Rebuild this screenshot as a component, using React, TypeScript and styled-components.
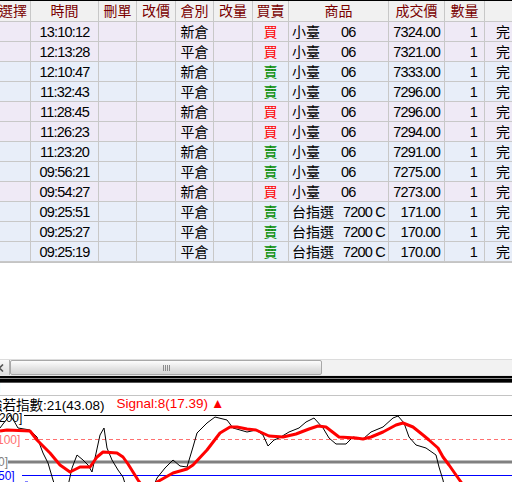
import React from 'react';
import styled, { createGlobalStyle } from 'styled-components';

const GlobalStyle = createGlobalStyle`
  html, body {
    margin: 0;
    padding: 0;
    background: #fff;
    overflow: hidden;
  }
  #root {
    width: 512px;
    height: 482px;
  }
`;

// widths of each column, border included (column lines at 30, 98, 136 ...)
const colWidths = [35, 68, 38, 39, 38, 39, 36, 100, 56, 40, 28];
const headers = ['選擇', '時間', '刪單', '改價', '倉別', '改量', '買賣', '商品', '成交價', '數量', ''];

type Side = 'buy' | 'sell';

interface Fill {
  time: string;
  kind: string;
  side: Side;
  product: string;
  code: string;
  price: string;
}

const fills: Fill[] = [
  { time: '13:10:12', kind: '新倉', side: 'buy', product: '小臺', code: '06', price: '7324.00' },
  { time: '12:13:28', kind: '平倉', side: 'buy', product: '小臺', code: '06', price: '7321.00' },
  { time: '12:10:47', kind: '新倉', side: 'sell', product: '小臺', code: '06', price: '7333.00' },
  { time: '11:32:43', kind: '平倉', side: 'sell', product: '小臺', code: '06', price: '7296.00' },
  { time: '11:28:45', kind: '新倉', side: 'buy', product: '小臺', code: '06', price: '7296.00' },
  { time: '11:26:23', kind: '平倉', side: 'buy', product: '小臺', code: '06', price: '7294.00' },
  { time: '11:23:20', kind: '新倉', side: 'sell', product: '小臺', code: '06', price: '7291.00' },
  { time: '09:56:21', kind: '平倉', side: 'sell', product: '小臺', code: '06', price: '7275.00' },
  { time: '09:54:27', kind: '新倉', side: 'buy', product: '小臺', code: '06', price: '7273.00' },
  { time: '09:25:51', kind: '平倉', side: 'sell', product: '台指選', code: '7200 C', price: '171.00' },
  { time: '09:25:27', kind: '平倉', side: 'sell', product: '台指選', code: '7200 C', price: '170.00' },
  { time: '09:25:19', kind: '平倉', side: 'sell', product: '台指選', code: '7200 C', price: '170.00' },
];

const Window = styled.div`
  width: 512px;
  height: 482px;
  overflow: hidden;
  display: flex;
  flex-direction: column;
  font-family: 'Liberation Sans', 'Noto Sans CJK TC', sans-serif;
  background: #fff;
`;

const GridPane = styled.div`
  height: 359px;
  flex: none;
  overflow: hidden;
`;

const Table = styled.div`
  margin-left: -4px;
  width: max-content;
  border-bottom: 1px solid #c4c4c4;
`;

const HeaderRow = styled.div`
  display: flex;
  height: 22px;
  box-sizing: border-box;
  border-top: 1px solid #000;
  border-bottom: 1px solid #c8c8c8;
  background: #f1f1f1;
  color: #7a0000;
  font-size: 14px;
`;

const Row = styled.div<{ $side: Side }>`
  display: flex;
  height: 20px;
  box-sizing: border-box;
  border-bottom: 1px solid #c8c8c8;
  background: ${({ $side }) => ($side === 'buy' ? '#efeaf6' : '#e8eef9')};
  color: #000;
  font-size: 14px;
`;

const Cell = styled.div<{ $w: number; $align?: 'left' | 'center' | 'right'; $pad?: number }>`
  width: ${({ $w }) => $w}px;
  flex: none;
  box-sizing: border-box;
  border-right: 1px solid #c8c8c8;
  display: flex;
  align-items: center;
  justify-content: ${({ $align }) =>
    $align === 'left' ? 'flex-start' : $align === 'right' ? 'flex-end' : 'center'};
  padding: 0 ${({ $pad }) => $pad ?? 0}px;
  white-space: nowrap;
  overflow: hidden;
  line-height: 18px;
`;

const Num = styled.span`
  font-size: 14.5px;
  letter-spacing: -0.8px;
`;

const SideMark = styled.span<{ $side: Side }>`
  color: ${({ $side }) => ($side === 'buy' ? '#ff0000' : '#008c00')};
`;

const ProductName = styled.span<{ $long: boolean }>`
  display: inline-block;
  width: ${({ $long }) => ($long ? 53 : 49)}px;
`;

const ScrollBar = styled.div`
  height: 17px;
  flex: none;
  display: flex;
  margin-left: -7px;
  box-sizing: border-box;
  border-top: 1px solid #dcdcdc;
  border-bottom: 1px solid #e6e6e6;
  background: #f2f2f2;
`;

const ArrowButton = styled.div`
  width: 17px;
  flex: none;
  display: flex;
  align-items: center;
  justify-content: center;
  box-sizing: border-box;
  border-right: 1px solid #b0b0b0;
  background: linear-gradient(#fafafa, #dcdcdc);
`;

const Thumb = styled.div`
  width: 312px;
  flex: none;
  box-sizing: border-box;
  border: 1px solid #a8a8a8;
  border-radius: 2px;
  background: linear-gradient(#fdfdfd, #e2e2e2 60%, #d4d4d4);
  display: flex;
  align-items: center;
  justify-content: center;
`;

const Grip = styled.div`
  width: 7px;
  height: 6px;
  background: repeating-linear-gradient(90deg, #8c8c8c 0 1px, transparent 1px 2px);
`;

const Splitter = styled.div`
  height: 7px;
  flex: none;
  background: linear-gradient(#000 0 2px, #8a8a8a 2px 3px, #000 3px 6px, #555 6px 7px);
`;

const ChartTop = styled.div`
  height: 13px;
  flex: none;
  box-sizing: border-box;
  border-bottom: 1px solid #c4c4c4;
  font-size: 12px;
  line-height: 6px;
  color: #000;
  margin-left: -3px;
`;

const Legend = styled.div`
  height: 15px;
  flex: none;
  display: flex;
  align-items: center;
  gap: 12px;
  margin-left: -11px;
  font-size: 13.5px;
  white-space: nowrap;
`;

const LegendItem = styled.span<{ $color: string }>`
  color: ${({ $color }) => $color};
  display: flex;
  align-items: center;
  gap: 3px;
`;

const ChartArea = styled.div`
  flex: 1;
  overflow: hidden;
`;

const redLine = [
  [0, 431], [7, 430], [30, 431], [37, 440], [50, 453], [60, 465], [70, 472], [80, 467],
  [90, 467], [97, 457], [103, 452], [117, 453], [123, 457], [128, 464], [133, 472],
  [138, 480], [145, 490], [150, 492], [157, 482], [173, 473], [187, 469], [193, 465],
  [207, 450], [220, 433], [230, 427], [237, 427], [247, 429], [256, 430], [269, 436],
  [283, 437], [296, 434], [309, 429], [318, 426], [326, 427], [339, 437], [356, 438],
  [363, 439], [371, 437], [383, 432], [396, 425], [403, 423], [413, 427], [423, 435],
  [429, 440], [438, 448], [443, 457], [449, 465], [456, 475], [461, 482], [466, 490],
];

const blackLine = [
  [0, 428], [3, 424], [10, 415], [14, 421], [18, 428], [30, 430], [37, 437], [43, 453],
  [48, 463], [53, 480], [58, 495], [66, 495], [72, 468], [77, 455], [83, 460], [88, 465],
  [92, 472], [95, 458], [100, 435], [104, 428], [107, 448], [112, 460], [118, 470],
  [123, 477], [127, 490], [150, 495], [157, 478], [165, 468], [173, 460], [180, 466],
  [187, 467], [193, 447], [197, 433], [207, 423], [215, 417], [227, 420], [233, 428],
  [247, 432], [256, 430], [263, 435], [268, 446], [274, 440], [279, 438], [289, 432],
  [299, 428], [306, 422], [314, 418], [323, 428], [329, 438], [336, 444], [346, 444],
  [353, 437], [363, 439], [371, 432], [383, 427], [393, 418], [398, 416], [404, 423],
  [409, 437], [416, 445], [426, 448], [436, 455], [439, 467], [443, 480], [445, 490],
];

const toPoints = (pts: number[][]) => pts.map(([x, y]) => `${x},${y}`).join(' ');

const OscillatorChart = () => (
  <svg width="512" height="80" viewBox="0 411 512 80" style={{ display: 'block' }}>
    <g fontFamily="'Liberation Sans', sans-serif" fontSize="12">
      <line x1="24" y1="415.5" x2="512" y2="415.5" stroke="#000" strokeWidth="1" />
      <text x="-1" y="422" fill="#000">200]</text>
      <line x1="25" y1="439.5" x2="512" y2="439.5" stroke="#ff7070" strokeWidth="1" strokeDasharray="4 3" />
      <text x="-3" y="444" fill="#ff7070">100]</text>
      <line x1="8" y1="462" x2="512" y2="462" stroke="#808080" strokeWidth="3" />
      <text x="-2" y="466" fill="#808080">0]</text>
      <line x1="22" y1="475.5" x2="512" y2="475.5" stroke="#0000ff" strokeWidth="1" />
      <text x="-6" y="480" fill="#0000ff">-50]</text>
      <rect x="25" y="481" width="3" height="1" fill="#8080ff" />
    </g>
    <polyline points={toPoints(blackLine)} fill="none" stroke="#000" strokeWidth="1" />
    <polyline points={toPoints(redLine)} fill="none" stroke="#ff0000" strokeWidth="3" strokeLinejoin="round" />
  </svg>
);

const App = () => (
  <>
    <GlobalStyle />
    <Window>
      <GridPane>
        <Table>
          <HeaderRow>
            {headers.map((h, i) => (
              <Cell key={i} $w={colWidths[i]}>
                {h}
              </Cell>
            ))}
          </HeaderRow>
          {fills.map((f, i) => (
            <Row key={i} $side={f.side}>
              <Cell $w={colWidths[0]} />
              <Cell $w={colWidths[1]}>
                <Num>{f.time}</Num>
              </Cell>
              <Cell $w={colWidths[2]} />
              <Cell $w={colWidths[3]} />
              <Cell $w={colWidths[4]}>{f.kind}</Cell>
              <Cell $w={colWidths[5]} />
              <Cell $w={colWidths[6]}>
                <SideMark $side={f.side}>{f.side === 'buy' ? '買' : '賣'}</SideMark>
              </Cell>
              <Cell $w={colWidths[7]} $align="left" $pad={3}>
                <ProductName $long={f.product.length > 2}>{f.product}</ProductName>
                <Num>{f.code}</Num>
              </Cell>
              <Cell $w={colWidths[8]} $align="right" $pad={4}>
                <Num>{f.price}</Num>
              </Cell>
              <Cell $w={colWidths[9]} $align="right" $pad={7}>
                <Num>1</Num>
              </Cell>
              <Cell $w={colWidths[10]} $align="left" $pad={11}>
                完
              </Cell>
            </Row>
          ))}
        </Table>
      </GridPane>
      <ScrollBar>
        <ArrowButton>
          <svg width="8" height="8" viewBox="0 0 8 8">
            <path d="M6 0.5 L2.5 4 L6 7.5" fill="none" stroke="#555" strokeWidth="1.6" />
          </svg>
        </ArrowButton>
        <Thumb>
          <Grip />
        </Thumb>
      </ScrollBar>
      <Splitter />
      <ChartTop>]</ChartTop>
      <Legend>
        <LegendItem $color="#000">強若指數:21(43.08)</LegendItem>
        <LegendItem $color="#ff0000">
          Signal:8(17.39)<span>▲</span>
        </LegendItem>
      </Legend>
      <ChartArea>
        <OscillatorChart />
      </ChartArea>
    </Window>
  </>
);

export default App;
